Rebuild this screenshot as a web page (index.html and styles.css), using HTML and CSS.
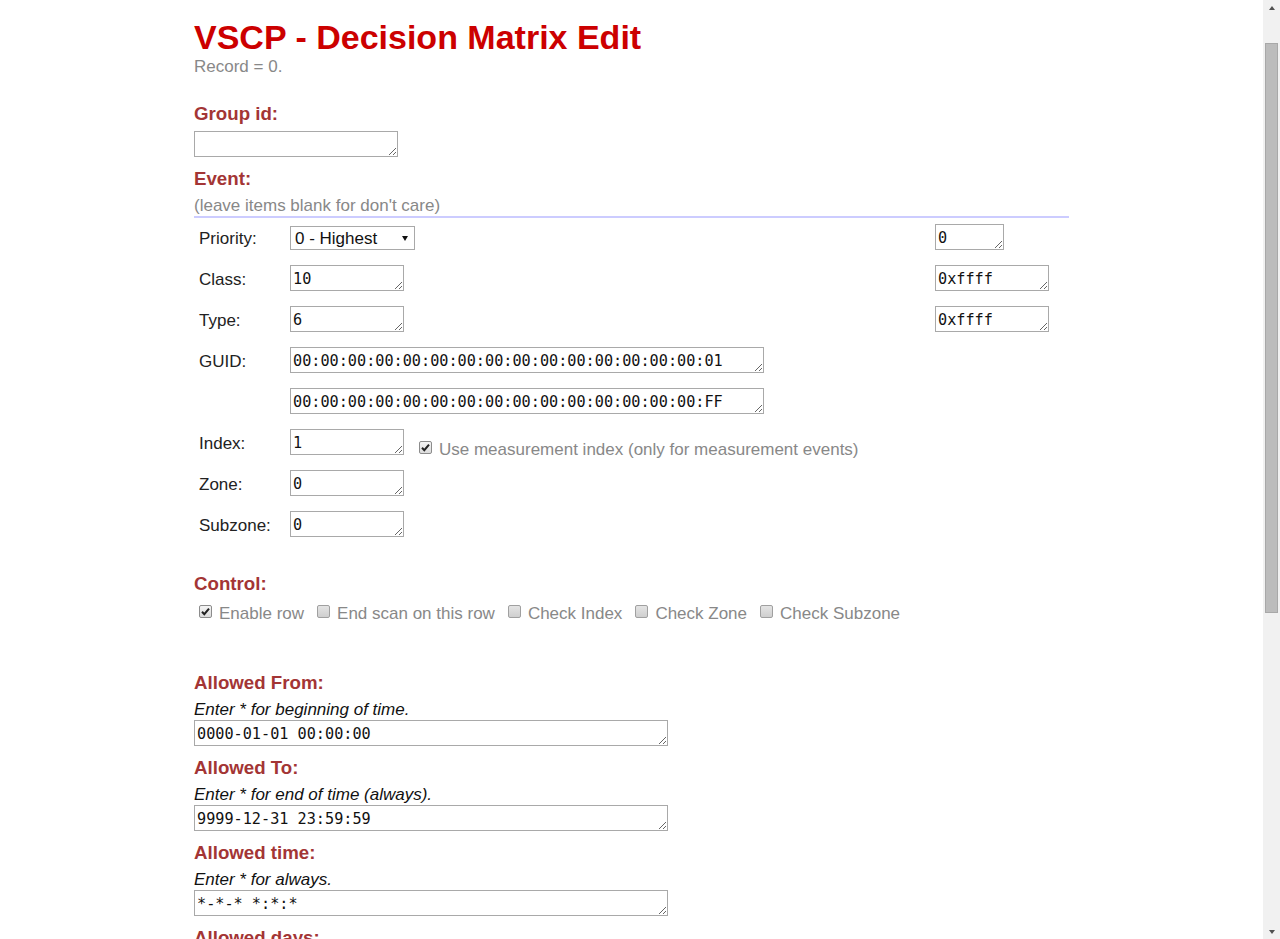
FILE: index.html
```html
<!DOCTYPE html>
<html lang="en">
<head>
<meta charset="utf-8">
<title>VSCP - Decision Matrix Edit</title>
<link rel="stylesheet" href="styles.css">
</head>
<body>
<div class="page">
  <h1 class="title">VSCP - Decision Matrix Edit</h1>
  <p class="record">Record = 0.</p>

  <h3 class="sec first">Group id:</h3>
  <textarea class="ta w204 gid"></textarea>

  <h3 class="sec">Event:</h3>
  <p class="hint">(leave items blank for don't care)</p>

  <div class="ev">
    <div class="row">
      <span class="lbl">Priority:</span>
      <div class="cell">
        <div class="sel-wrap">
          <select class="sel">
            <option>0 - Highest</option>
            <option>1 - Even higher</option>
            <option>2 - Higher</option>
            <option>3 - Normal</option>
            <option>4 - Low</option>
            <option>5 - Lower</option>
            <option>6 - Even lower</option>
            <option>7 - Lowest</option>
          </select>
        </div>
      </div>
      <div class="cell"><textarea class="ta w69">0</textarea></div>
    </div>
    <div class="row">
      <span class="lbl">Class:</span>
      <div class="cell"><textarea class="ta w114">10</textarea></div>
      <div class="cell"><textarea class="ta w114">0xffff</textarea></div>
    </div>
    <div class="row">
      <span class="lbl">Type:</span>
      <div class="cell"><textarea class="ta w114">6</textarea></div>
      <div class="cell"><textarea class="ta w114">0xffff</textarea></div>
    </div>
    <div class="row">
      <span class="lbl">GUID:</span>
      <div class="cell"><textarea class="ta w474">00:00:00:00:00:00:00:00:00:00:00:00:00:00:00:01</textarea></div>
      <div class="cell"></div>
    </div>
    <div class="row">
      <span class="lbl"></span>
      <div class="cell"><textarea class="ta w474">00:00:00:00:00:00:00:00:00:00:00:00:00:00:00:FF</textarea></div>
      <div class="cell"></div>
    </div>
    <div class="row">
      <span class="lbl">Index:</span>
      <div class="cell idx">
        <textarea class="ta w114">1</textarea>
        <label class="chk measure"><span class="box on"><svg viewBox="0 0 13 13" width="13" height="13"><path d="M3 6.8 L5.3 9.2 L10 3.6" fill="none" stroke="#222" stroke-width="2"/></svg></span>Use measurement index (only for measurement events)</label>
      </div>
      <div class="cell"></div>
    </div>
    <div class="row">
      <span class="lbl">Zone:</span>
      <div class="cell"><textarea class="ta w114">0</textarea></div>
      <div class="cell"></div>
    </div>
    <div class="row">
      <span class="lbl">Subzone:</span>
      <div class="cell"><textarea class="ta w114">0</textarea></div>
      <div class="cell"></div>
    </div>
  </div>

  <h3 class="sec block">Control:</h3>
  <div class="checks">
    <label class="chk"><span class="box on"><svg viewBox="0 0 13 13" width="13" height="13"><path d="M3 6.8 L5.3 9.2 L10 3.6" fill="none" stroke="#222" stroke-width="2"/></svg></span>Enable row</label>
    <label class="chk"><span class="box"></span>End scan on this row</label>
    <label class="chk"><span class="box"></span>Check Index</label>
    <label class="chk"><span class="box"></span>Check Zone</label>
    <label class="chk"><span class="box"></span>Check Subzone</label>
  </div>

  <h3 class="sec far">Allowed From:</h3>
  <p class="note">Enter * for beginning of time.</p>
  <textarea class="ta w474 tb">0000-01-01 00:00:00</textarea>

  <h3 class="sec">Allowed To:</h3>
  <p class="note">Enter * for end of time (always).</p>
  <textarea class="ta w474 tb">9999-12-31 23:59:59</textarea>

  <h3 class="sec">Allowed time:</h3>
  <p class="note">Enter * for always.</p>
  <textarea class="ta w474 tb">*-*-* *:*:*</textarea>

  <h3 class="sec">Allowed days:</h3>
  <div class="checks days">
    <label class="chk"><span class="box on"><svg viewBox="0 0 13 13" width="13" height="13"><path d="M3 6.8 L5.3 9.2 L10 3.6" fill="none" stroke="#222" stroke-width="2"/></svg></span>Monday</label>
    <label class="chk"><span class="box on"><svg viewBox="0 0 13 13" width="13" height="13"><path d="M3 6.8 L5.3 9.2 L10 3.6" fill="none" stroke="#222" stroke-width="2"/></svg></span>Tuesday</label>
    <label class="chk"><span class="box on"><svg viewBox="0 0 13 13" width="13" height="13"><path d="M3 6.8 L5.3 9.2 L10 3.6" fill="none" stroke="#222" stroke-width="2"/></svg></span>Wednesday</label>
    <label class="chk"><span class="box on"><svg viewBox="0 0 13 13" width="13" height="13"><path d="M3 6.8 L5.3 9.2 L10 3.6" fill="none" stroke="#222" stroke-width="2"/></svg></span>Thursday</label>
    <label class="chk"><span class="box on"><svg viewBox="0 0 13 13" width="13" height="13"><path d="M3 6.8 L5.3 9.2 L10 3.6" fill="none" stroke="#222" stroke-width="2"/></svg></span>Friday</label>
    <label class="chk"><span class="box on"><svg viewBox="0 0 13 13" width="13" height="13"><path d="M3 6.8 L5.3 9.2 L10 3.6" fill="none" stroke="#222" stroke-width="2"/></svg></span>Saturday</label>
    <label class="chk"><span class="box on"><svg viewBox="0 0 13 13" width="13" height="13"><path d="M3 6.8 L5.3 9.2 L10 3.6" fill="none" stroke="#222" stroke-width="2"/></svg></span>Sunday</label>
  </div>

  <h3 class="sec far">Action:</h3>
  <div class="sel-wrap wide">
    <select class="sel wide">
      <option>No Operation</option>
    </select>
  </div>

  <h3 class="sec mid">Action parameter:</h3>
  <textarea class="ta w474 tall"></textarea>

  <h3 class="sec">Comment:</h3>
  <textarea class="ta w474 tall"></textarea>

  <div class="actions"><button class="btn" type="button">Save</button></div>
</div>

<div class="vscroll" aria-hidden="true">
  <div class="sb-btn"><span class="tri up"></span></div>
  <div class="sb-thumb"></div>
  <div class="sb-btn end"><span class="tri down"></span></div>
</div>
</body>
</html>
```

FILE: styles.css
```css
body {
  margin: 0;
  padding-right: 17px;
  background: #fff;
  color: #222;
  font-family: "Liberation Sans", Arial, sans-serif;
  font-size: 17px;
}

.page {
  width: 875px;
  margin: 0 auto;
  padding: 18px 0 60px;
}

.title {
  margin: 0;
  font-size: 34px;
  font-weight: bold;
  color: #cc0000;
}

.record {
  margin: 0;
  color: #888;
}

.sec {
  margin: 0 0 6px;
  font-size: 18.7px;
  font-weight: bold;
  color: #a33535;
}

.sec.first { margin-top: 26px; }
.sec.block { margin-top: 27px; }
.sec.far { margin-top: 48px; }
.sec.mid { margin-top: 20px; }

.ta {
  display: block;
  box-sizing: border-box;
  height: 26px;
  margin: 0 0 11px;
  padding: 4px 2px 0;
  border: 1px solid #a9a9a9;
  background: #fff;
  color: #111;
  font-family: "DejaVu Sans Mono", "Liberation Mono", monospace;
  font-size: 15.2px;
  line-height: 18px;
  resize: both;
  overflow: hidden;
}

.ta.gid { margin-bottom: 11px; }

.w69 { width: 69px; }
.w114 { width: 114px; }
.w204 { width: 204px; }
.w474 { width: 474px; }
.tall { height: 60px; }
.ta.tb { margin-top: 0; margin-bottom: 11px; }

.hint {
  margin: 3px 0 0;
  color: #888;
  border-bottom: 2px solid #ccccff;
}

.ev {
  display: grid;
  grid-template-columns: 96px 645px 134px;
  grid-auto-rows: 41px;
}

.row {
  display: contents;
}

.lbl {
  align-self: center;
  padding-left: 5px;
  color: #222;
}

.cell {
  align-self: center;
}

.cell .ta {
  margin: 0 0 3px;
}

.cell.idx {
  display: flex;
  align-items: flex-end;
}

.sel-wrap {
  position: relative;
  width: 125px;
  margin-bottom: 1px;
}

.sel-wrap::after {
  content: "";
  position: absolute;
  right: 7px;
  top: 10px;
  border-left: 3.5px solid transparent;
  border-right: 3.5px solid transparent;
  border-top: 5px solid #111;
  pointer-events: none;
}

.sel {
  display: block;
  box-sizing: border-box;
  width: 125px;
  height: 24px;
  margin: 0;
  padding: 0 0 0 4px;
  border: 1px solid #a9a9a9;
  border-radius: 0;
  background: #fff;
  color: #111;
  font-family: "Liberation Sans", Arial, sans-serif;
  font-size: 17px;
  appearance: none;
  -webkit-appearance: none;
}

.sel-wrap.wide, .sel.wide { width: 200px; }

.checks {
  display: flex;
  gap: 13px;
  margin-top: 9px;
  padding-left: 5px;
}

.chk {
  display: inline-flex;
  align-items: flex-start;
  color: #888;
}

.chk.measure {
  margin-left: 15px;
  margin-bottom: -2px;
}

.box {
  box-sizing: border-box;
  display: inline-block;
  flex: none;
  width: 13px;
  height: 13px;
  margin: 1px 7px 0 0;
  border: 1px solid #a0a0a0;
  border-radius: 2px;
  background: linear-gradient(#e4e4e4, #cfcfcf);
  overflow: hidden;
}

.box svg {
  display: block;
  margin: -1px;
}

.box.on {
  background: linear-gradient(#f4f4f4, #dcdcdc);
  border-color: #8c8c8c;
}

.note {
  margin: 2px 0 0;
  font-style: italic;
  color: #111;
}

.actions {
  margin-top: 10px;
}

.btn {
  font-family: "Liberation Sans", Arial, sans-serif;
  font-size: 15px;
  padding: 4px 16px;
  border: 1px solid #a9a9a9;
  border-radius: 3px;
  background: linear-gradient(#fafafa, #e2e2e2);
  color: #222;
}

/* window scrollbar as drawn by the browser */
.vscroll {
  position: fixed;
  top: 0;
  right: 0;
  width: 17px;
  height: 100vh;
  display: flex;
  flex-direction: column;
  background: #f1f1f1;
}

.sb-btn {
  height: 17px;
  display: flex;
  align-items: center;
  justify-content: center;
  flex: none;
}

.sb-btn.end {
  margin-top: auto;
}

.tri {
  width: 0;
  height: 0;
  border-left: 3.5px solid transparent;
  border-right: 3.5px solid transparent;
}

.tri.up {
  border-bottom: 4px solid #505050;
  margin-top: -1px;
}

.tri.down {
  border-top: 4px solid #505050;
  margin-top: 3px;
}

.sb-thumb {
  box-sizing: border-box;
  flex: none;
  width: 13px;
  height: 570px;
  margin: 26px 0 0 2px;
  background: #bcbcbc;
  border: 1px solid #a8a8a8;
}
```
